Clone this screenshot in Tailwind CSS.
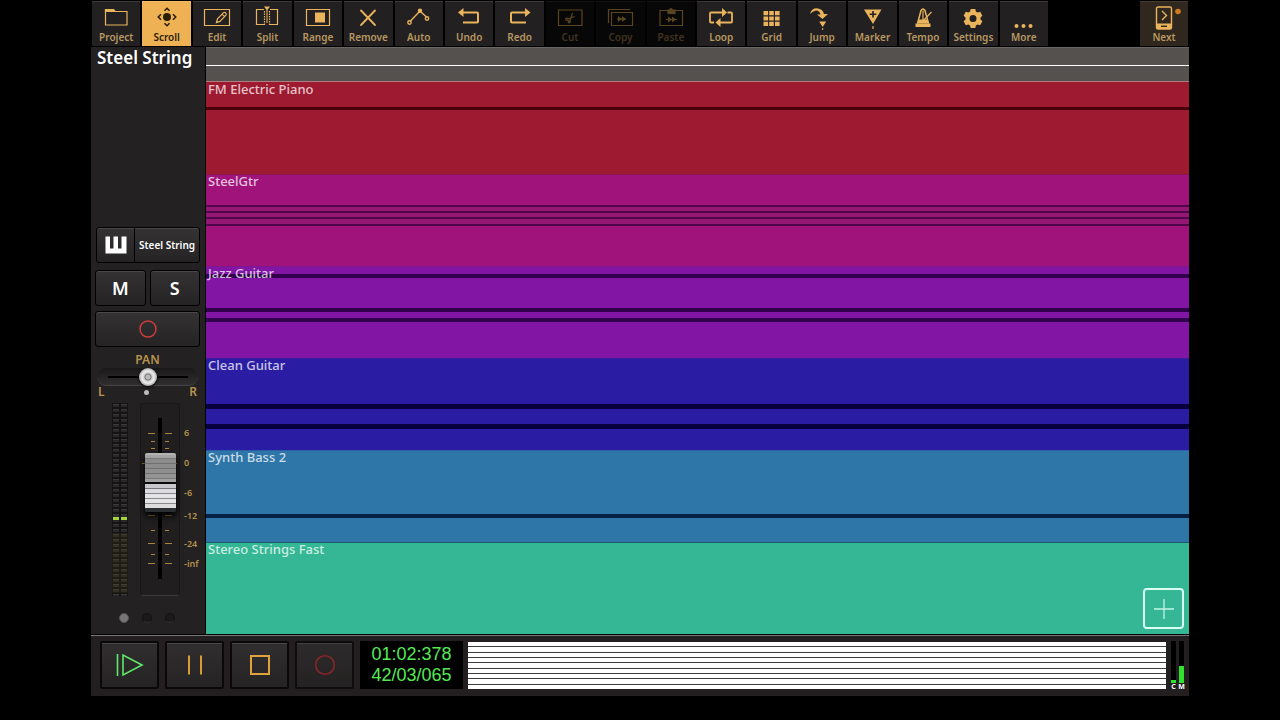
<!DOCTYPE html>
<html lang="en">
<head>
  <meta charset="UTF-8" />
  <meta name="viewport" content="width=device-width, initial-scale=1" />
  <title>Steel String - Arranger</title>
  <script src="https://cdn.jsdelivr.net/npm/@tailwindcss/browser@4"></script>
</head>
<body class="bg-black h-screen px-[91px] pb-6 flex flex-col overflow-hidden font-['Noto_Sans',sans-serif]">

  <!-- Toolbar -->
  <header class="flex justify-between h-[47px] shrink-0 px-px pt-px pb-px text-[10px] leading-[14px] font-semibold text-[#b89860]">
    <nav class="flex gap-0.5 w-[956px] [&>button]:flex-1 [&>button]:basis-0 [&>button]:min-w-0 [&>button]:flex [&>button]:flex-col [&>button]:items-center [&>button]:pt-1 [&>button]:border-t [&>button]:border-[#3a383b] [&_svg]:w-7 [&_svg]:h-6 [&_svg]:shrink-0">
      <button class="bg-[#232022]">
        <svg viewBox="0 0 28 24" fill="none" stroke="#eab45c" stroke-width="1.2"><path d="M3.5 19V3.5h8l1.5 2h12V19z"/><path d="M3.5 3.500h8l1.5 2h-9.5z" fill="#eab45c"/></svg>
        Project
      </button>
      <button class="bg-[#eeb255] border-[#f0bc6a]! text-[#2b1e08]">
        <svg viewBox="0 0 28 24" fill="none" stroke="#2b1e08" stroke-width="1.6"><circle cx="14" cy="11" r="4" fill="#2b1e08" stroke="none"/><path d="M11.5 4.800L14 2.300l2.5 2.500M11.500 17.200l2.500 2.500 2.500-2.500M8 8.300L5.300 11 8 13.700M20 8.300l2.700 2.700-2.700 2.700"/></svg>
        Scroll
      </button>
      <button class="bg-[#232022]">
        <svg viewBox="0 0 28 24" fill="none" stroke="#eab45c" stroke-width="1.2"><path d="M1.500 3.500h25v16h-25z"/><path d="M13.500 16.500l1-3.600 6-6.200q1.300-.8 2.200.2t.2 2.200l-6 6.300zM19 8.200l2.500 2.500"/></svg>
        Edit
      </button>
      <button class="bg-[#232022]">
        <svg viewBox="0 0 28 24" fill="none" stroke="#eab45c" stroke-width="1.2"><path d="M11 18.500H3.500v-15h7.500M17 18.500h7.500v-15H17"/><path d="M11.500 5v14M16.500 5v14" stroke-dasharray="1.500 1"/><path d="M14 4v13" stroke-width="1"/><path d="M11 .5h6l-3 4z" fill="#eab45c" stroke="none"/></svg>
        Split
      </button>
      <button class="bg-[#232022]">
        <svg viewBox="0 0 28 24" fill="none" stroke="#eab45c" stroke-width="1.2"><path d="M2.500 3.500h23v16h-23z"/><path d="M11 6.500h10v10H11z" fill="#eab45c" stroke="none"/></svg>
        Range
      </button>
      <button class="bg-[#232022]">
        <svg viewBox="0 0 28 24" fill="none" stroke="#eab45c" stroke-width="1.8" stroke-linecap="round"><path d="M7 4.500l14 14.500M21 4.500L7 19"/></svg>
        Remove
      </button>
      <button class="bg-[#232022]">
        <svg viewBox="0 0 28 24" fill="none" stroke="#eab45c" stroke-width="1.4"><path d="M5.500 15L14 6M16 6l5.500 5"/><circle cx="4.500" cy="16.500" r="1.700"/><circle cx="15" cy="4.800" r="1.500" fill="#eab45c"/><circle cx="22" cy="12.500" r="1.700"/></svg>
        Auto
      </button>
      <button class="bg-[#232022]">
        <svg viewBox="0 0 28 24" fill="none" stroke="#eab45c" stroke-width="2"><path d="M7 6.500h15q1 0 1 1v8q0 1-1 1H8"/><path d="M3 6.500L8.500 2v9z" fill="#eab45c" stroke="none"/></svg>
        Undo
      </button>
      <button class="bg-[#232022]">
        <svg viewBox="0 0 28 24" fill="none" stroke="#eab45c" stroke-width="2"><path d="M20 6.500H6q-1 0-1 1v8q0 1 1 1h14"/><path d="M24.500 6.500L19 2v9z" fill="#eab45c" stroke="none"/></svg>
        Redo
      </button>
      <button disabled class="bg-[#080707] border-[#151313]! text-[#41341f]">
        <svg viewBox="0 0 28 24" fill="none" stroke="#5a4522" stroke-width="1.2"><path d="M2.500 4h23.500v15.500H2.500z"/><path d="M16.500 7l-3 9M18.500 10.500L12 13"/><circle cx="10.800" cy="13.300" r="1.200"/><circle cx="13.200" cy="15.800" r="1"/></svg>
        Cut
      </button>
      <button disabled class="bg-[#080707] border-[#151313]! text-[#41341f]">
        <svg viewBox="0 0 28 24" fill="none" stroke="#5a4522" stroke-width="1.2"><path d="M5.500 6.500h21v13h-21z"/><path d="M2.500 17V3.500H24"/><path d="M11 13h9"/><path d="M12 10l4 3-4 3zM16 10l4 3-4 3z" fill="#5a4522" stroke="none"/></svg>
        Copy
      </button>
      <button disabled class="bg-[#080707] border-[#151313]! text-[#41341f]">
        <svg viewBox="0 0 28 24" fill="none" stroke="#5a4522" stroke-width="1.2"><path d="M3 4.500h22.500v15H3z"/><path d="M11 4.500V4h1.500q1.500-3 3 0H18v3.500h-7z" fill="#5a4522"/><path d="M9 13.500h11"/><path d="M11 10.500l4 3-4 3zM15 10.500l4 3-4 3z" fill="#5a4522" stroke="none"/></svg>
        Paste
      </button>
      <button class="bg-[#232022]">
        <svg viewBox="0 0 28 24" fill="none" stroke="#eab45c" stroke-width="1.8"><path d="M7 16.500H4q-1 0-1-1v-8q0-1 1-1h12M20.500 6.500H24q1 0 1 1v8q0 1-1 1H12"/><path d="M15 2l5 4.500-5 4.500zM13.500 12l-5 4.500 5 4.500z" fill="#eab45c" stroke="none"/></svg>
        Loop
      </button>
      <button class="bg-[#232022]">
        <svg viewBox="0 0 28 24" fill="#eab45c"><path d="M5.500 5h4.600v4.200H5.500zM11.200 5h4.600v4.200h-4.600zM17 5h4.600v4.200H17zM5.500 10.400h4.600v4.200H5.500zM11.200 10.400h4.600v4.200h-4.600zM17 10.400h4.600v4.200H17zM5.500 15.800h4.600V20H5.500zM11.200 15.800h4.600V20h-4.600zM17 15.800h4.600V20H17z"/></svg>
        Grid
      </button>
      <button class="bg-[#232022]">
        <svg viewBox="0 0 28 24" fill="#eab45c"><path d="M2 8Q3.500 2 9 2.200 15 3 16 8h4L14.500 13 9 8.500h3.500Q11.500 4.500 8 4.500 4.500 5 2 8zM11.200 15.500h7L14.700 21zM14.200 22h1v2h-1z"/></svg>
        Jump
      </button>
      <button class="bg-[#232022]">
        <svg viewBox="0 0 28 24" fill="#eab45c"><path d="M5 3.500h17.500L14 18zM13.400 20h1.200v3h-1.200z"/><path d="M14 5v6.500M10.700 8.300h6.600" stroke="#232022" stroke-width="1.6"/></svg>
        Marker
      </button>
      <button class="bg-[#232022]">
        <svg viewBox="0 0 28 24" fill="none" stroke="#eab45c" stroke-width="1.5"><path d="M8.500 17.500L12 4.500q2-3 4 0l3.500 13"/><path d="M14 4.500v9.500" stroke-width="1.2"/><path d="M9.500 13.500h9l1.500 4H8z" fill="#eab45c" stroke="none"/><path d="M6.500 17.500h15V21h-15z" fill="#eab45c" stroke="none"/><path d="M14 15l8.500-9" stroke-width="1.2"/></svg>
        Tempo
      </button>
      <button class="bg-[#232022]">
        <svg viewBox="0 0 28 24" fill="#eab45c" fill-rule="evenodd"><path d="M11.700 3h4.600l.6 2.600 1.700 1 2.600-.8 2.200 3.900-1.900 1.900v1.800l1.900 1.900-2.200 3.900-2.600-.8-1.700 1-.6 2.600h-4.600l-.6-2.600-1.700-1-2.600.8-2.200-3.900 1.900-1.900v-1.800l-1.900-1.900 2.200-3.900 2.600.8 1.700-1zM14 9a3.500 3.500 0 1 0 0 7 3.500 3.500 0 1 0 0-7z"/></svg>
        Settings
      </button>
      <button class="bg-[#232022]">
        <svg viewBox="0 0 28 24" fill="#eab45c"><circle cx="6.500" cy="20" r="2"/><circle cx="13.500" cy="20" r="2"/><circle cx="20.500" cy="20" r="2"/></svg>
        More
      </button>
    </nav>
    <button class="w-12 flex flex-col items-center pt-1 bg-[#30271f] border-t border-[#443a30]">
      <svg class="w-9 h-6 shrink-0" viewBox="0 0 36 24" fill="none" stroke="#eab45c" stroke-width="1.4"><rect x="10.500" y="1" width="15" height="22" rx="1.500"/><path d="M11 17.500h14V23H11z" fill="#eab45c" stroke="none"/><path d="M15 20.300h6" stroke="#30271f"/><path d="M16 5l4.500 4.500L16 14"/><circle cx="32" cy="5.500" r="2.800" fill="#d17a1c" stroke="none"/></svg>
      Next
    </button>
  </header>

  <main class="flex-1 min-h-0 flex">
    <!-- Channel strip -->
    <aside class="w-[115px] shrink-0 flex flex-col bg-[#232122] border-r border-black pl-1 pr-[5px] text-white">
      <h1 class="pl-0.5 text-[17px] leading-[22px] font-semibold whitespace-nowrap h-[180px]">Steel String</h1>

      <button class="h-9 shrink-0 flex items-center ml-px rounded-[3px] border border-black bg-linear-to-b from-[#343233] to-[#252324] shadow-[inset_0_1px_0_#4a4849]">
        <span class="w-[38px] h-full flex items-center justify-center border-r border-black">
          <svg class="w-[22px] h-[18px]" viewBox="0 0 22 18" fill="#fff"><path d="M.5.500H5V12.500h3.500V.5H13V12.500h3.500V.5H21.500v17H.5z"/></svg>
        </span>
        <span class="flex-1 text-[10px] font-semibold whitespace-nowrap">Steel String</span>
      </button>

      <div class="flex gap-1 mt-[7px] h-9 shrink-0 text-[18px] font-semibold">
        <button class="flex-1 rounded-[3px] border border-black bg-linear-to-b from-[#343233] to-[#252324] shadow-[inset_0_1px_0_#4a4849]">M</button>
        <button class="flex-1 rounded-[3px] border border-black bg-linear-to-b from-[#343233] to-[#252324] shadow-[inset_0_1px_0_#4a4849]">S</button>
      </div>

      <button aria-label="Record arm" class="flex items-center justify-center mt-[5px] h-9 shrink-0 rounded-[3px] border border-black bg-linear-to-b from-[#343233] to-[#252324] shadow-[inset_0_1px_0_#4a4849]">
        <svg class="w-5 h-5" viewBox="0 0 20 20" fill="none" stroke="#cf3d38" stroke-width="1.5"><circle cx="10" cy="10" r="8"/></svg>
      </button>

      <!-- Pan -->
      <label for="pan" class="mt-[5px] h-4 leading-4 text-center text-[12px] font-semibold text-[#b8934e]">PAN</label>
      <div class="flex items-center h-[18px] shrink-0 mx-0.5 rounded-full bg-[linear-gradient(#1a1819,#302e2f)] border-b border-[#454344]">
        <input id="pan" type="range" min="-50" max="50" value="0" class="w-20 h-[18px] mx-auto appearance-none bg-[linear-gradient(#000,#000)] bg-[length:100%_2px] bg-center bg-no-repeat [&::-webkit-slider-thumb]:appearance-none [&::-webkit-slider-thumb]:size-[18px] [&::-webkit-slider-thumb]:rounded-full [&::-webkit-slider-thumb]:bg-[radial-gradient(circle,#bbb_0_2px,#777_3px,#ccc_4px,#eee_6px,#aaa_9px)] [&::-webkit-slider-thumb]:shadow-[0_1px_3px_#000]" />
      </div>
      <div class="flex items-center justify-between h-3 shrink-0 px-[3px] text-[12px] leading-3 font-semibold text-[#b8934e]">
        <span>L</span>
        <span class="size-[5px] rounded-full bg-[#bbb]"></span>
        <span>R</span>
      </div>

      <!-- Level meter and volume fader -->
      <div class="flex mt-[5px] h-[193px] shrink-0">
        <svg class="w-4 h-full ml-[17px] shrink-0" viewBox="0 0 16 193">
          <defs>
            <pattern id="leds" width="8" height="5" patternUnits="userSpaceOnUse">
              <rect width="8" height="5" fill="#151414"/>
              <rect x="1" y="1" width="6" height="3" fill="#2a2828"/>
              <rect x="1" y="1" width="6" height="1" fill="#3a3838"/>
            </pattern>
          </defs>
          <rect width="16" height="193" rx="1" fill="url(#leds)"/>
          <rect y="130" width="16" height="60" fill="#6a5a10" opacity=".12"/>
          <path d="M1 115.500h6M9 115.500h6" stroke="#a4d43a" stroke-width="3"/>
        </svg>
        <div class="relative ml-3 w-10 shrink-0 rounded-[3px] bg-[#201e1f] border border-[#191718] border-b-[#3a3839]">
          <svg class="w-full h-full" viewBox="0 0 38 191" stroke="#a8853f" stroke-width="1">
            <path d="M19 14v161" stroke="#000" stroke-width="4"/>
            <path d="M7 29.500h7M24 29.500h7M10 37.500h4M24 37.500h4M10 44.500h4M24 44.500h4M7 111.500h7M24 111.500h7M10 126.500h4M24 126.500h4M7 139.500h7M24 139.500h7M10 150.500h4M24 150.500h4M7 159.500h7M24 159.500h7M1 59.500h35"/>
          </svg>
          <input type="range" aria-label="Volume" min="0" max="100" value="63" class="absolute top-0 left-1 m-0 w-[31px] h-[191px] appearance-none bg-transparent [writing-mode:vertical-lr] [direction:rtl] [&::-webkit-slider-thumb]:appearance-none [&::-webkit-slider-thumb]:w-[31px] [&::-webkit-slider-thumb]:h-[59px] [&::-webkit-slider-thumb]:rounded-[2px] [&::-webkit-slider-thumb]:bg-[linear-gradient(#b4b4b4_0_2px,#a4a4a4_2px_5px,#777_5px_6px,#8c8c8c_6px_10px,#707070_10px_11px,#8c8c8c_11px_15px,#707070_15px_16px,#909090_16px_20px,#707070_20px_21px,#949494_21px_25px,#777_25px_26px,#a0a0a0_26px_29px,#0c0c0c_29px_31px,#c8c8cc_31px_35px,#777_35px_36px,#dcdce0_36px_40px,#888_40px_41px,#e4e4e6_41px_45px,#888_45px_46px,#e4e4e6_46px_50px,#888_50px_51px,#ddd_51px_55px,#2b2f31_55px_59px)] [&::-webkit-slider-thumb]:shadow-[0_4px_6px_#000]" />
        </div>
        <svg class="w-6 h-full shrink-0 ml-1" viewBox="0 0 24 193" fill="#b3904c" font-size="9" font-weight="600">
          <text x="0" y="33">6</text>
          <text x="0" y="63">0</text>
          <text x="0" y="93">-6</text>
          <text x="0" y="116">-12</text>
          <text x="0" y="144">-24</text>
          <text x="0" y="164">-inf</text>
        </svg>
      </div>

      <div class="flex gap-[13px] mt-[17px] ml-6">
        <span class="size-2.5 rounded-full bg-[#777] border border-[#555]"></span>
        <span class="size-2.5 rounded-full bg-[#1b191a] border border-[#151314] border-b-[#333]"></span>
        <span class="size-2.5 rounded-full bg-[#1b191a] border border-[#151314] border-b-[#333]"></span>
      </div>
    </aside>

    <!-- Arrangement -->
    <section class="relative flex-1 min-w-0 flex flex-col text-[13px] leading-[14px] font-medium text-white/75 [&>div]:relative [&_h2]:relative [&_h2]:pl-0.5 [&_i]:absolute [&_i]:inset-x-0">
      <div class="h-[35px] shrink-0 bg-[#55514e] border-t border-[#6a6663] border-b border-b-[#b07c80]">
        <i class="top-[17px] h-px bg-white"></i>
      </div>
      <div class="flex-1 bg-[#9e1a30]">
        <i class="top-[25px] h-[3px] bg-[#470009]"></i>
        <h2>FM Electric Piano</h2>
      </div>
      <div class="flex-1 bg-[#9f137b] shadow-[inset_0_1px_0_#861850]">
        <i class="top-[31px] h-[20px] bg-[#951774]"></i>
        <i class="top-[31px] h-0.5 bg-[#500548]"></i>
        <i class="top-[37px] h-0.5 bg-[#500548]"></i>
        <i class="top-[43px] h-0.5 bg-[#500548]"></i>
        <i class="top-[50px] h-0.5 bg-[#500548]"></i>
        <h2>SteelGtr</h2>
      </div>
      <div class="flex-1 bg-[#8215a4] shadow-[inset_0_1px_0_#80178f]">
        <i class="top-[8px] h-1 bg-[#30004d]"></i>
        <i class="top-[42px] h-1 bg-[#30004d]"></i>
        <i class="top-[52px] h-1 bg-[#30004d]"></i>
        <h2>Jazz Guitar</h2>
      </div>
      <div class="flex-1 bg-[#2a1da4] shadow-[inset_0_1px_0_#3d1d9c]">
        <i class="top-[46px] h-[5px] bg-[#08003c]"></i>
        <i class="top-[66px] h-[5px] bg-[#08003c]"></i>
        <h2>Clean Guitar</h2>
      </div>
      <div class="flex-1 bg-[#2e75a8] shadow-[inset_0_1px_0_#2c5fa5]">
        <i class="top-[64px] h-1 bg-[#062145]"></i>
        <h2>Synth Bass 2</h2>
      </div>
      <div class="flex-1 bg-[#35b795] shadow-[inset_0_1px_0_#1b5a6c]">
        <h2>Stereo Strings Fast</h2>
      </div>
      <button aria-label="Add track" class="absolute right-[5px] bottom-[5px] size-[41px] flex items-center justify-center rounded-[4px] border-2 border-[#d9fff4]">
        <svg class="w-5 h-5" viewBox="0 0 20 20" stroke="#c4f5e6" stroke-width="1.3"><path d="M10 0v20M0 10h20"/></svg>
      </button>
    </section>
  </main>

  <!-- Transport -->
  <footer class="flex h-[62px] shrink-0 bg-[#231f20] border-t border-black pt-1.5 pb-[7px] pl-[9px] pr-[5px] shadow-[inset_0_1px_0_#77787a]">
    <div class="flex gap-1.5 [&>button]:w-[59px] [&>button]:flex [&>button]:items-center [&>button]:justify-center [&>button]:rounded-[2px] [&>button]:border-2 [&>button]:border-[#0a0909] [&>button]:bg-linear-to-b [&>button]:from-[#302e2e] [&>button]:to-[#252323] [&>button]:shadow-[inset_0_1px_0_#484646] [&_svg]:w-8 [&_svg]:h-6">
      <button aria-label="Play">
        <svg viewBox="0 0 32 24" fill="none" stroke="#5fe86a" stroke-width="1.6"><path d="M3.500 1v22M9 2v20l19-10z"/></svg>
      </button>
      <button aria-label="Pause">
        <svg viewBox="0 0 32 24" fill="none" stroke="#d99b34" stroke-width="2"><path d="M10 2.500v19M22 2.500v19"/></svg>
      </button>
      <button aria-label="Stop">
        <svg viewBox="0 0 32 24" fill="none" stroke="#e0a23c" stroke-width="2"><path d="M7 3h18v18H7z"/></svg>
      </button>
      <button aria-label="Record" class="opacity-80">
        <svg viewBox="0 0 32 24" fill="none" stroke="#a3282b" stroke-width="1.6"><circle cx="16" cy="12" r="9.300"/></svg>
      </button>
    </div>
    <div class="w-[103px] shrink-0 ml-[6px] flex flex-col justify-center text-center bg-black text-[#54ea54] text-[18px] leading-[21px] font-['Liberation_Sans',sans-serif]">
      <span>01:02:378</span>
      <span>42/03/065</span>
    </div>
    <!-- Song overview -->
    <div class="flex-1 min-w-0 ml-[5px] mt-px flex flex-col gap-px bg-[#3c3c3c] [&>i]:flex-1 [&>i]:bg-white">
      <i></i><i></i><i></i><i></i><i></i><i></i><i></i><i></i><i></i>
    </div>
    <!-- CPU and master levels -->
    <div class="flex gap-[3px] ml-[5px] -mb-0.5 text-[7px] leading-[8px] font-bold text-white">
      <div class="w-[5px] flex flex-col items-center">
        <div class="flex-1 w-full flex items-end bg-black"><span class="w-full h-[3px] bg-[#2ee22e]"></span></div>
        C
      </div>
      <div class="w-[5px] flex flex-col items-center">
        <div class="flex-1 w-full flex items-end bg-black"><span class="w-full h-[17px] bg-[#2ee22e]"></span></div>
        M
      </div>
    </div>
  </footer>
</body>
</html>
